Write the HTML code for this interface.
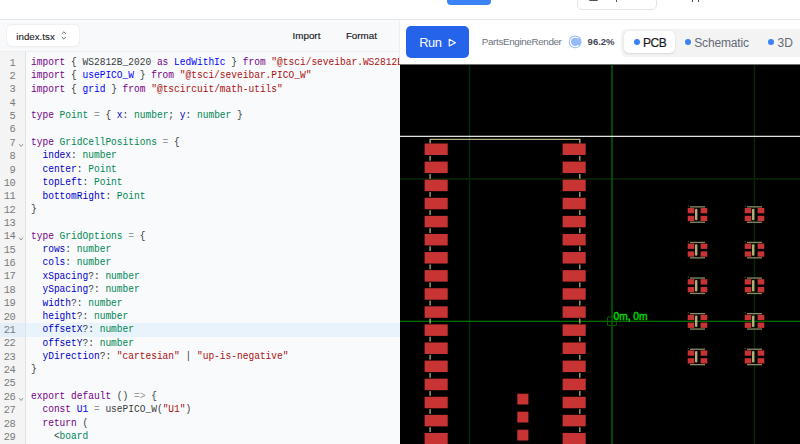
<!DOCTYPE html>
<html><head><meta charset="utf-8">
<style>
*{box-sizing:border-box;margin:0;padding:0}
html,body{width:800px;height:444px;overflow:hidden;background:#fff;font-family:"Liberation Sans",sans-serif}
.abs{position:absolute;white-space:nowrap}
#topline{left:0;top:19px;width:800px;height:1px;background:#e5e7eb}
#lefthdr{left:0;top:20px;width:400px;height:32px;background:#f8f9fb;border-bottom:1px solid #edeef0}
#sel{left:7px;top:25px;width:72px;height:21px;background:#fff;border-radius:5px;box-shadow:0 0 0 1px #eef0f3,0 1px 2px rgba(0,0,0,.06)}
.btntxt{color:#18181b;line-height:normal}
#gutter{left:0;top:52px;width:26px;height:392px;background:#f4f4f4;border-right:1px solid #e2e2e2}
#code{left:26px;top:52px;width:374px;height:392px;background:#f9fafb}
.ln{position:absolute;left:0;width:15.2px;text-align:right;font-family:"Liberation Mono",monospace;font-size:10.4px;letter-spacing:-0.5px;color:#7a7a7a;line-height:13.36px}
.cl{position:absolute;left:31px;white-space:pre;font-family:"Liberation Mono",monospace;font-size:10.6px;color:#383a42;line-height:13.36px;transform:scaleX(0.9);transform-origin:0 0}
.fold{position:absolute;left:17px;width:7px;font-size:8px;color:#999;line-height:13.36px}
.o{color:#999}
.k{color:#708}.d{color:#00f}.t{color:#085}.p{color:#00c}.s{color:#a11}
#righthdr{left:400px;top:20px;width:400px;height:44px;background:#fff}
#run{left:406px;top:26px;width:63px;height:32px;background:#2563eb;border-radius:5px}
#tabs{left:621px;top:28.5px;width:190px;height:28.5px;background:#f3f3f4;border-radius:6px}
#pcbtab{left:624.3px;top:31.3px;width:50.8px;height:22px;background:#fff;border-radius:5px;box-shadow:0 1px 2px rgba(0,0,0,.10),0 0 1px rgba(0,0,0,.08)}
.dot{position:absolute;width:5.8px;height:5.8px;border-radius:50%;background:#3b82f6}
</style></head><body>
<!-- partial top toolbar -->
<div class="abs" style="left:447px;top:-10px;width:44px;height:15px;background:#3b82f6;border-radius:4px"></div>
<div class="abs" style="left:577px;top:-10px;width:80px;height:19.5px;background:#fff;border:1px solid #e2e4e8;border-radius:5px"></div>
<div class="abs" style="left:589px;top:-4px;width:9px;height:5px;background:#555;border-radius:1px"></div>
<div class="abs" style="left:616px;top:-2px;width:1px;height:4px;background:#555"></div>
<div class="abs" style="left:692px;top:-2px;width:1.2px;height:3.5px;background:#555"></div>
<div class="abs" style="left:698px;top:-2px;width:1.2px;height:3.5px;background:#555"></div>
<div class="abs" id="topline"></div>

<div class="abs" id="lefthdr"></div>
<div class="abs" id="sel"></div>
<div class="abs btntxt" style="left:16.3px;top:30.5px;font-size:9.75px;-webkit-text-stroke:0.1px #18181b">index.tsx</div>
<svg class="abs" style="left:60px;top:30px" width="8" height="11"><path d="M1.8 3.8 L3.9 1.8 L6.0 3.8 M1.8 7.0 L3.9 9.0 L6.0 7.0" fill="none" stroke="#555" stroke-width="0.85"/></svg>
<div class="abs btntxt" style="left:292.6px;top:30.1px;font-size:9.8px;-webkit-text-stroke:0.15px #18181b">Import</div>
<div class="abs btntxt" style="left:345.9px;top:30.1px;font-size:9.8px;-webkit-text-stroke:0.15px #18181b">Format</div>

<div class="abs" id="gutter"></div>
<div class="abs" id="code"></div>
<div class="abs" id="lines" style="left:0;top:0;width:400px;height:444px;overflow:hidden">
<div class="ln" style="top:56.60px">1</div>
<div class="cl" style="top:55.90px"><span class="k">import</span> { WS2812B_2020 <span class="k">as</span> <span class="d">LedWithIc</span> } <span class="k">from</span> <span class="s">&quot;@tsci/seveibar.WS2812B_2020&quot;</span></div>
<div class="ln" style="top:69.97px">2</div>
<div class="cl" style="top:69.27px"><span class="k">import</span> { <span class="d">usePICO_W</span> } <span class="k">from</span> <span class="s">&quot;@tsci/seveibar.PICO_W&quot;</span></div>
<div class="ln" style="top:83.34px">3</div>
<div class="cl" style="top:82.64px"><span class="k">import</span> { <span class="d">grid</span> } <span class="k">from</span> <span class="s">&quot;@tscircuit/math-utils&quot;</span></div>
<div class="ln" style="top:96.70px">4</div>
<div class="cl" style="top:96.00px"></div>
<div class="ln" style="top:110.07px">5</div>
<div class="cl" style="top:109.37px"><span class="k">type</span> <span class="t">Point</span> <span class="o">=</span> { <span class="p">x</span>: <span class="t">number</span>; <span class="p">y</span>: <span class="t">number</span> }</div>
<div class="ln" style="top:123.44px">6</div>
<div class="cl" style="top:122.74px"></div>
<div class="ln" style="top:136.81px">7</div>
<svg class="abs" style="left:0;top:0" width="30" height="444"><path d="M19.3 144.11 L21.15 146.51 L23 144.11" fill="none" stroke="#808080" stroke-width="0.85"/></svg>
<div class="cl" style="top:136.11px"><span class="k">type</span> <span class="t">GridCellPositions</span> <span class="o">=</span> {</div>
<div class="ln" style="top:150.18px">8</div>
<div class="cl" style="top:149.48px">  <span class="p">index</span>: <span class="t">number</span></div>
<div class="ln" style="top:163.54px">9</div>
<div class="cl" style="top:162.84px">  <span class="p">center</span>: <span class="t">Point</span></div>
<div class="ln" style="top:176.91px">10</div>
<div class="cl" style="top:176.21px">  <span class="p">topLeft</span>: <span class="t">Point</span></div>
<div class="ln" style="top:190.28px">11</div>
<div class="cl" style="top:189.58px">  <span class="p">bottomRight</span>: <span class="t">Point</span></div>
<div class="ln" style="top:203.65px">12</div>
<div class="cl" style="top:202.95px">}</div>
<div class="ln" style="top:217.02px">13</div>
<div class="cl" style="top:216.32px"></div>
<div class="ln" style="top:230.38px">14</div>
<svg class="abs" style="left:0;top:0" width="30" height="444"><path d="M19.3 237.68 L21.15 240.08 L23 237.68" fill="none" stroke="#808080" stroke-width="0.85"/></svg>
<div class="cl" style="top:229.68px"><span class="k">type</span> <span class="t">GridOptions</span> <span class="o">=</span> {</div>
<div class="ln" style="top:243.75px">15</div>
<div class="cl" style="top:243.05px">  <span class="p">rows</span>: <span class="t">number</span></div>
<div class="ln" style="top:257.12px">16</div>
<div class="cl" style="top:256.42px">  <span class="p">cols</span>: <span class="t">number</span></div>
<div class="ln" style="top:270.49px">17</div>
<div class="cl" style="top:269.79px">  <span class="p">xSpacing</span>?: <span class="t">number</span></div>
<div class="ln" style="top:283.86px">18</div>
<div class="cl" style="top:283.16px">  <span class="p">ySpacing</span>?: <span class="t">number</span></div>
<div class="ln" style="top:297.22px">19</div>
<div class="cl" style="top:296.52px">  <span class="p">width</span>?: <span class="t">number</span></div>
<div class="ln" style="top:310.59px">20</div>
<div class="cl" style="top:309.89px">  <span class="p">height</span>?: <span class="t">number</span></div>
<div class="abs" style="left:0;top:323.16px;width:25px;height:13.368px;background:#e4eef8"></div>
<div class="abs" style="left:26px;top:323.16px;width:374px;height:13.368px;background:#e9f3fc"></div>
<div class="ln" style="top:323.96px">21</div>
<div class="cl" style="top:323.26px">  <span class="p">offsetX</span>?: <span class="t">number</span></div>
<div class="ln" style="top:337.33px">22</div>
<div class="cl" style="top:336.63px">  <span class="p">offsetY</span>?: <span class="t">number</span></div>
<div class="ln" style="top:350.70px">23</div>
<div class="cl" style="top:350.00px">  <span class="p">yDirection</span>?: <span class="s">&quot;cartesian&quot;</span> | <span class="s">&quot;up-is-negative&quot;</span></div>
<div class="ln" style="top:364.06px">24</div>
<div class="cl" style="top:363.36px">}</div>
<div class="ln" style="top:377.43px">25</div>
<div class="cl" style="top:376.73px"></div>
<div class="ln" style="top:390.80px">26</div>
<svg class="abs" style="left:0;top:0" width="30" height="444"><path d="M19.3 398.10 L21.15 400.50 L23 398.10" fill="none" stroke="#808080" stroke-width="0.85"/></svg>
<div class="cl" style="top:390.10px"><span class="k">export</span> <span class="k">default</span> () <span class="o">=&gt;</span> {</div>
<div class="ln" style="top:404.17px">27</div>
<div class="cl" style="top:403.47px">  <span class="k">const</span> <span class="d">U1</span> <span class="o">=</span> usePICO_W(<span class="s">&quot;U1&quot;</span>)</div>
<div class="ln" style="top:417.54px">28</div>
<div class="cl" style="top:416.84px">  <span class="k">return</span> (</div>
<div class="ln" style="top:430.90px">29</div>
<div class="cl" style="top:430.20px">    &lt;<span class="t">board</span></div>
</div>

<div class="abs" id="righthdr"></div>
<div class="abs" style="left:399px;top:20px;width:1px;height:44px;background:#eceef1"></div>
<div class="abs" id="run"></div>
<div class="abs" style="left:419.3px;top:35.2px;font-size:12.9px;letter-spacing:-0.55px;color:#fff">Run</div>
<svg class="abs" style="left:446px;top:37px" width="12" height="12"><path d="M3.2 2.3 L9.4 5.65 L3.2 9 Z" fill="none" stroke="#fff" stroke-width="1.1" stroke-linejoin="round"/></svg>
<div class="abs" style="left:481.8px;top:36.34px;font-size:9.9px;letter-spacing:-0.38px;color:#6b7280">PartsEngineRender</div>
<svg class="abs" style="left:566px;top:33px" width="18" height="18"><circle cx="9.15" cy="8.8" r="6.4" fill="#96b9f8"/><path d="M12.55 5.4 A4.8 4.8 0 1 0 12.55 12.2" fill="none" stroke="#fff" stroke-width="1.25"/></svg>
<div class="abs" style="left:587.6px;top:36.2px;font-size:9.5px;font-weight:bold;color:#3f4654">96.2%</div>
<div class="abs" id="tabs"></div>
<div class="abs" id="pcbtab"></div>
<div class="dot" style="left:634.1px;top:39.2px"></div>
<div class="abs" style="left:643px;top:35.8px;font-size:12px;-webkit-text-stroke:0.2px #1a1a1a;letter-spacing:-0.5px;color:#1a1a1a">PCB</div>
<div class="dot" style="left:684.9px;top:39.2px"></div>
<div class="abs" style="left:694.2px;top:35.8px;font-size:12px;letter-spacing:-0.15px;color:#636a75">Schematic</div>
<div class="dot" style="left:768.2px;top:39.2px"></div>
<div class="abs" style="left:777.5px;top:35.8px;font-size:12px;color:#636a75">3D</div>

<svg class="abs" style="left:0;top:0" width="800" height="444" id="pcb">
<rect x="400" y="64.45" width="400" height="380" fill="#000"/>
<rect x="468.75" y="65" width="1.5" height="380" fill="#072807"/>
<rect x="753.75" y="65" width="1.5" height="380" fill="#072807"/>
<rect x="400" y="178.25" width="400" height="1.5" fill="#072807"/>
<rect x="611.4" y="64.6" width="1.2" height="380" fill="#007800"/>
<rect x="400" y="320.7" width="400" height="1.2" fill="#007800"/>
<rect x="400" y="135.75" width="400" height="1.2" fill="#ececec"/>
<rect x="607.5" y="317" width="8.8" height="8.5" fill="none" stroke="#0a5a0a" stroke-width="1.1" rx="1"/>
<text x="613.5" y="320" font-family="Liberation Sans" font-size="10.2" fill="#00d400" stroke="#00d400" stroke-width="0.45">0m, 0m</text>
<path d="M430.1 143.5 V139.4 H579.8 V143.5" fill="none" stroke="#b0b07c" stroke-width="1.35"/>
<rect x="424.6" y="143.50" width="23.1" height="11.5" fill="#c83434"/>
<rect x="562.6" y="143.50" width="23.1" height="11.5" fill="#c83434"/>
<rect x="429.45000000000005" y="155.90" width="1.3" height="4.79" fill="#b0b07c"/>
<rect x="579.15" y="155.90" width="1.3" height="4.79" fill="#b0b07c"/>
<rect x="424.6" y="161.59" width="23.1" height="11.5" fill="#c83434"/>
<rect x="562.6" y="161.59" width="23.1" height="11.5" fill="#c83434"/>
<rect x="429.45000000000005" y="173.99" width="1.3" height="4.79" fill="#b0b07c"/>
<rect x="579.15" y="173.99" width="1.3" height="4.79" fill="#b0b07c"/>
<rect x="424.6" y="179.68" width="23.1" height="11.5" fill="#c83434"/>
<rect x="562.6" y="179.68" width="23.1" height="11.5" fill="#c83434"/>
<rect x="429.45000000000005" y="192.08" width="1.3" height="4.79" fill="#b0b07c"/>
<rect x="579.15" y="192.08" width="1.3" height="4.79" fill="#b0b07c"/>
<rect x="424.6" y="197.77" width="23.1" height="11.5" fill="#c83434"/>
<rect x="562.6" y="197.77" width="23.1" height="11.5" fill="#c83434"/>
<rect x="429.45000000000005" y="210.17" width="1.3" height="4.79" fill="#b0b07c"/>
<rect x="579.15" y="210.17" width="1.3" height="4.79" fill="#b0b07c"/>
<rect x="424.6" y="215.86" width="23.1" height="11.5" fill="#c83434"/>
<rect x="562.6" y="215.86" width="23.1" height="11.5" fill="#c83434"/>
<rect x="429.45000000000005" y="228.26" width="1.3" height="4.79" fill="#b0b07c"/>
<rect x="579.15" y="228.26" width="1.3" height="4.79" fill="#b0b07c"/>
<rect x="424.6" y="233.95" width="23.1" height="11.5" fill="#c83434"/>
<rect x="562.6" y="233.95" width="23.1" height="11.5" fill="#c83434"/>
<rect x="429.45000000000005" y="246.35" width="1.3" height="4.79" fill="#b0b07c"/>
<rect x="579.15" y="246.35" width="1.3" height="4.79" fill="#b0b07c"/>
<rect x="424.6" y="252.04" width="23.1" height="11.5" fill="#c83434"/>
<rect x="562.6" y="252.04" width="23.1" height="11.5" fill="#c83434"/>
<rect x="429.45000000000005" y="264.44" width="1.3" height="4.79" fill="#b0b07c"/>
<rect x="579.15" y="264.44" width="1.3" height="4.79" fill="#b0b07c"/>
<rect x="424.6" y="270.13" width="23.1" height="11.5" fill="#c83434"/>
<rect x="562.6" y="270.13" width="23.1" height="11.5" fill="#c83434"/>
<rect x="429.45000000000005" y="282.53" width="1.3" height="4.79" fill="#b0b07c"/>
<rect x="579.15" y="282.53" width="1.3" height="4.79" fill="#b0b07c"/>
<rect x="424.6" y="288.22" width="23.1" height="11.5" fill="#c83434"/>
<rect x="562.6" y="288.22" width="23.1" height="11.5" fill="#c83434"/>
<rect x="429.45000000000005" y="300.62" width="1.3" height="4.79" fill="#b0b07c"/>
<rect x="579.15" y="300.62" width="1.3" height="4.79" fill="#b0b07c"/>
<rect x="424.6" y="306.31" width="23.1" height="11.5" fill="#c83434"/>
<rect x="562.6" y="306.31" width="23.1" height="11.5" fill="#c83434"/>
<rect x="429.45000000000005" y="318.71" width="1.3" height="4.79" fill="#b0b07c"/>
<rect x="579.15" y="318.71" width="1.3" height="4.79" fill="#b0b07c"/>
<rect x="424.6" y="324.40" width="23.1" height="11.5" fill="#c83434"/>
<rect x="562.6" y="324.40" width="23.1" height="11.5" fill="#c83434"/>
<rect x="429.45000000000005" y="336.80" width="1.3" height="4.79" fill="#b0b07c"/>
<rect x="579.15" y="336.80" width="1.3" height="4.79" fill="#b0b07c"/>
<rect x="424.6" y="342.49" width="23.1" height="11.5" fill="#c83434"/>
<rect x="562.6" y="342.49" width="23.1" height="11.5" fill="#c83434"/>
<rect x="429.45000000000005" y="354.89" width="1.3" height="4.79" fill="#b0b07c"/>
<rect x="579.15" y="354.89" width="1.3" height="4.79" fill="#b0b07c"/>
<rect x="424.6" y="360.58" width="23.1" height="11.5" fill="#c83434"/>
<rect x="562.6" y="360.58" width="23.1" height="11.5" fill="#c83434"/>
<rect x="429.45000000000005" y="372.98" width="1.3" height="4.79" fill="#b0b07c"/>
<rect x="579.15" y="372.98" width="1.3" height="4.79" fill="#b0b07c"/>
<rect x="424.6" y="378.67" width="23.1" height="11.5" fill="#c83434"/>
<rect x="562.6" y="378.67" width="23.1" height="11.5" fill="#c83434"/>
<rect x="429.45000000000005" y="391.07" width="1.3" height="4.79" fill="#b0b07c"/>
<rect x="579.15" y="391.07" width="1.3" height="4.79" fill="#b0b07c"/>
<rect x="424.6" y="396.76" width="23.1" height="11.5" fill="#c83434"/>
<rect x="562.6" y="396.76" width="23.1" height="11.5" fill="#c83434"/>
<rect x="429.45000000000005" y="409.16" width="1.3" height="4.79" fill="#b0b07c"/>
<rect x="579.15" y="409.16" width="1.3" height="4.79" fill="#b0b07c"/>
<rect x="424.6" y="414.85" width="23.1" height="11.5" fill="#c83434"/>
<rect x="562.6" y="414.85" width="23.1" height="11.5" fill="#c83434"/>
<rect x="429.45000000000005" y="427.25" width="1.3" height="4.79" fill="#b0b07c"/>
<rect x="579.15" y="427.25" width="1.3" height="4.79" fill="#b0b07c"/>
<rect x="424.6" y="432.94" width="23.1" height="11.5" fill="#c83434"/>
<rect x="562.6" y="432.94" width="23.1" height="11.5" fill="#c83434"/>
<rect x="429.45000000000005" y="445.34" width="1.3" height="4.79" fill="#b0b07c"/>
<rect x="579.15" y="445.34" width="1.3" height="4.79" fill="#b0b07c"/>
<rect x="517.3" y="393.70" width="11.1" height="10.8" fill="#c83434"/>
<rect x="517.3" y="411.70" width="11.1" height="10.8" fill="#c83434"/>
<rect x="517.3" y="429.70" width="11.1" height="10.8" fill="#c83434"/>
<rect x="687.70" y="208.00" width="6.6" height="5.3" fill="#c83434"/>
<rect x="700.60" y="208.00" width="6.7" height="5.3" fill="#c83434"/>
<rect x="687.70" y="215.80" width="6.6" height="5.3" fill="#c83434"/>
<rect x="700.60" y="215.80" width="6.7" height="5.3" fill="#c83434"/>
<rect x="690.00" y="206.20" width="15" height="1.3" fill="#8a8a60"/>
<rect x="690.00" y="221.60" width="15" height="1.3" fill="#8a8a60"/>
<rect x="695.00" y="208.70" width="2.4" height="11.5" rx="1" fill="#b0b07c"/>
<rect x="687.80" y="205.60" width="1" height="1" fill="#6a6a50"/>
<rect x="687.70" y="243.60" width="6.6" height="5.3" fill="#c83434"/>
<rect x="700.60" y="243.60" width="6.7" height="5.3" fill="#c83434"/>
<rect x="687.70" y="251.40" width="6.6" height="5.3" fill="#c83434"/>
<rect x="700.60" y="251.40" width="6.7" height="5.3" fill="#c83434"/>
<rect x="690.00" y="241.80" width="15" height="1.3" fill="#8a8a60"/>
<rect x="690.00" y="257.20" width="15" height="1.3" fill="#8a8a60"/>
<rect x="695.00" y="244.30" width="2.4" height="11.5" rx="1" fill="#b0b07c"/>
<rect x="687.80" y="241.20" width="1" height="1" fill="#6a6a50"/>
<rect x="687.70" y="279.20" width="6.6" height="5.3" fill="#c83434"/>
<rect x="700.60" y="279.20" width="6.7" height="5.3" fill="#c83434"/>
<rect x="687.70" y="287.00" width="6.6" height="5.3" fill="#c83434"/>
<rect x="700.60" y="287.00" width="6.7" height="5.3" fill="#c83434"/>
<rect x="690.00" y="277.40" width="15" height="1.3" fill="#8a8a60"/>
<rect x="690.00" y="292.80" width="15" height="1.3" fill="#8a8a60"/>
<rect x="695.00" y="279.90" width="2.4" height="11.5" rx="1" fill="#b0b07c"/>
<rect x="687.80" y="276.80" width="1" height="1" fill="#6a6a50"/>
<rect x="687.70" y="314.80" width="6.6" height="5.3" fill="#c83434"/>
<rect x="700.60" y="314.80" width="6.7" height="5.3" fill="#c83434"/>
<rect x="687.70" y="322.60" width="6.6" height="5.3" fill="#c83434"/>
<rect x="700.60" y="322.60" width="6.7" height="5.3" fill="#c83434"/>
<rect x="690.00" y="313.00" width="15" height="1.3" fill="#8a8a60"/>
<rect x="690.00" y="328.40" width="15" height="1.3" fill="#8a8a60"/>
<rect x="695.00" y="315.50" width="2.4" height="11.5" rx="1" fill="#b0b07c"/>
<rect x="687.80" y="312.40" width="1" height="1" fill="#6a6a50"/>
<rect x="687.70" y="350.40" width="6.6" height="5.3" fill="#c83434"/>
<rect x="700.60" y="350.40" width="6.7" height="5.3" fill="#c83434"/>
<rect x="687.70" y="358.20" width="6.6" height="5.3" fill="#c83434"/>
<rect x="700.60" y="358.20" width="6.7" height="5.3" fill="#c83434"/>
<rect x="690.00" y="348.60" width="15" height="1.3" fill="#8a8a60"/>
<rect x="690.00" y="364.00" width="15" height="1.3" fill="#8a8a60"/>
<rect x="695.00" y="351.10" width="2.4" height="11.5" rx="1" fill="#b0b07c"/>
<rect x="687.80" y="348.00" width="1" height="1" fill="#6a6a50"/>
<rect x="744.70" y="208.00" width="6.6" height="5.3" fill="#c83434"/>
<rect x="757.60" y="208.00" width="6.7" height="5.3" fill="#c83434"/>
<rect x="744.70" y="215.80" width="6.6" height="5.3" fill="#c83434"/>
<rect x="757.60" y="215.80" width="6.7" height="5.3" fill="#c83434"/>
<rect x="747.00" y="206.20" width="15" height="1.3" fill="#8a8a60"/>
<rect x="747.00" y="221.60" width="15" height="1.3" fill="#8a8a60"/>
<rect x="752.00" y="208.70" width="2.4" height="11.5" rx="1" fill="#b0b07c"/>
<rect x="744.80" y="205.60" width="1" height="1" fill="#6a6a50"/>
<rect x="744.70" y="243.60" width="6.6" height="5.3" fill="#c83434"/>
<rect x="757.60" y="243.60" width="6.7" height="5.3" fill="#c83434"/>
<rect x="744.70" y="251.40" width="6.6" height="5.3" fill="#c83434"/>
<rect x="757.60" y="251.40" width="6.7" height="5.3" fill="#c83434"/>
<rect x="747.00" y="241.80" width="15" height="1.3" fill="#8a8a60"/>
<rect x="747.00" y="257.20" width="15" height="1.3" fill="#8a8a60"/>
<rect x="752.00" y="244.30" width="2.4" height="11.5" rx="1" fill="#b0b07c"/>
<rect x="744.80" y="241.20" width="1" height="1" fill="#6a6a50"/>
<rect x="744.70" y="279.20" width="6.6" height="5.3" fill="#c83434"/>
<rect x="757.60" y="279.20" width="6.7" height="5.3" fill="#c83434"/>
<rect x="744.70" y="287.00" width="6.6" height="5.3" fill="#c83434"/>
<rect x="757.60" y="287.00" width="6.7" height="5.3" fill="#c83434"/>
<rect x="747.00" y="277.40" width="15" height="1.3" fill="#8a8a60"/>
<rect x="747.00" y="292.80" width="15" height="1.3" fill="#8a8a60"/>
<rect x="752.00" y="279.90" width="2.4" height="11.5" rx="1" fill="#b0b07c"/>
<rect x="744.80" y="276.80" width="1" height="1" fill="#6a6a50"/>
<rect x="744.70" y="314.80" width="6.6" height="5.3" fill="#c83434"/>
<rect x="757.60" y="314.80" width="6.7" height="5.3" fill="#c83434"/>
<rect x="744.70" y="322.60" width="6.6" height="5.3" fill="#c83434"/>
<rect x="757.60" y="322.60" width="6.7" height="5.3" fill="#c83434"/>
<rect x="747.00" y="313.00" width="15" height="1.3" fill="#8a8a60"/>
<rect x="747.00" y="328.40" width="15" height="1.3" fill="#8a8a60"/>
<rect x="752.00" y="315.50" width="2.4" height="11.5" rx="1" fill="#b0b07c"/>
<rect x="744.80" y="312.40" width="1" height="1" fill="#6a6a50"/>
<rect x="744.70" y="350.40" width="6.6" height="5.3" fill="#c83434"/>
<rect x="757.60" y="350.40" width="6.7" height="5.3" fill="#c83434"/>
<rect x="744.70" y="358.20" width="6.6" height="5.3" fill="#c83434"/>
<rect x="757.60" y="358.20" width="6.7" height="5.3" fill="#c83434"/>
<rect x="747.00" y="348.60" width="15" height="1.3" fill="#8a8a60"/>
<rect x="747.00" y="364.00" width="15" height="1.3" fill="#8a8a60"/>
<rect x="752.00" y="351.10" width="2.4" height="11.5" rx="1" fill="#b0b07c"/>
<rect x="744.80" y="348.00" width="1" height="1" fill="#6a6a50"/>
</svg>
</body></html>
